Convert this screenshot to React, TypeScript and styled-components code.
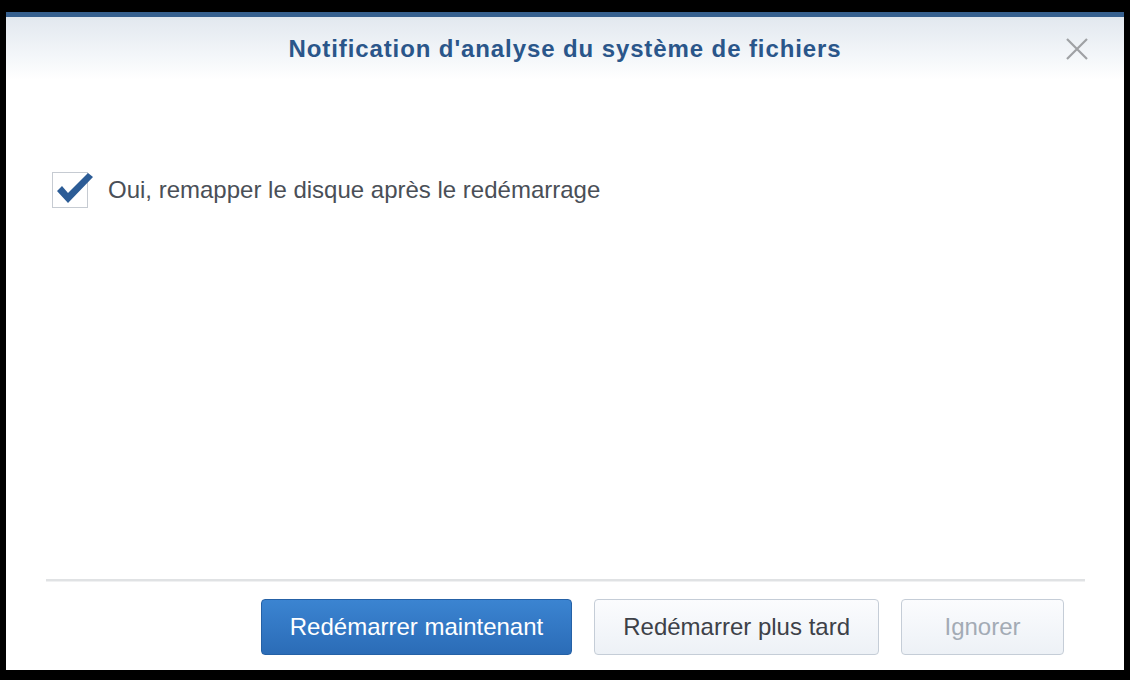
import styled, { createGlobalStyle } from "styled-components";

const GlobalStyle = createGlobalStyle`
  html, body {
    margin: 0;
    padding: 0;
    background: #000;
  }
  body {
    font-family: "Liberation Sans", Arial, sans-serif;
  }
`;

const Screen = styled.div`
  width: 1130px;
  height: 680px;
  padding: 12px 6px 10px 6px;
  box-sizing: border-box;
  display: flex;
`;

const Dialog = styled.div`
  flex: 1;
  display: flex;
  flex-direction: column;
  background: #fff;
  border-top: 5px solid #36608f;
`;

const Header = styled.header`
  height: 63px;
  flex-shrink: 0;
  display: flex;
  align-items: center;
  justify-content: center;
  position: relative;
  background: linear-gradient(to bottom, #e2e8ef 0%, #f3f6f9 60%, #ffffff 100%);
`;

const Title = styled.h1`
  margin: 0;
  font-size: 24px;
  font-weight: bold;
  letter-spacing: 0.9px;
  color: #2a568a;
`;

const CloseButton = styled.button`
  position: absolute;
  right: 34px;
  top: 19px;
  width: 26px;
  height: 26px;
  padding: 0;
  border: none;
  background: none;
  display: flex;
  align-items: center;
  justify-content: center;
  cursor: pointer;
`;

const Body = styled.div`
  flex: 1;
  padding: 92px 46px 0 46px;
`;

const CheckRow = styled.label`
  display: flex;
  align-items: center;
  gap: 20px;
  cursor: pointer;
`;

const CheckBox = styled.span`
  width: 34px;
  height: 34px;
  border: 1px solid #c6cbd2;
  background: #fff;
  position: relative;
  flex-shrink: 0;
`;

const CheckMark = styled.svg`
  position: absolute;
  left: 1px;
  top: -3px;
`;

const CheckLabel = styled.span`
  font-size: 24px;
  color: #4a4f57;
`;

const Footer = styled.footer`
  flex-shrink: 0;
  margin: 0 39px 0 40px;
  border-top: 2px solid #e0e2e4;
  box-shadow: inset 0 1px 0 #f0f1f2;
  padding: 18px 21px 15px 0;
  display: flex;
  justify-content: flex-end;
  gap: 22px;
`;

const Button = styled.button<{ $variant: "primary" | "default" | "disabled" }>`
  height: 56px;
  padding: 0 28px;
  border-radius: 4px;
  font-family: "Liberation Sans", Arial, sans-serif;
  font-size: 24px;
  cursor: pointer;
  border: 1px solid
    ${(p) => (p.$variant === "primary" ? "#2561a6" : "#c5cdd7")};
  background: ${(p) =>
    p.$variant === "primary"
      ? "linear-gradient(to bottom, #3b84d1 0%, #2b6cb7 100%)"
      : "linear-gradient(to bottom, #fbfcfe 0%, #edf1f6 100%)"};
  color: ${(p) =>
    p.$variant === "primary"
      ? "#ffffff"
      : p.$variant === "disabled"
      ? "#a3abb5"
      : "#3d4148"};
  min-width: ${(p) => (p.$variant === "disabled" ? "163px" : "auto")};
`;

export default function App() {
  return (
    <>
      <GlobalStyle />
      <Screen>
        <Dialog>
          <Header>
            <Title>Notification d'analyse du système de fichiers</Title>
            <CloseButton aria-label="Fermer">
              <svg width="24" height="24" viewBox="0 0 24 24">
                <path
                  d="M2 2 L22 22 M22 2 L2 22"
                  stroke="#9fa1a4"
                  strokeWidth="2.2"
                  fill="none"
                />
              </svg>
            </CloseButton>
          </Header>
          <Body>
            <CheckRow>
              <CheckBox>
                <CheckMark width="42" height="37" viewBox="0 0 42 37">
                  <path
                    d="M3 21 L8 16 L14 23 L34 3 L39 7 L14 33 Z"
                    fill="#2c5c96"
                  />
                </CheckMark>
              </CheckBox>
              <CheckLabel>Oui, remapper le disque après le redémarrage</CheckLabel>
            </CheckRow>
          </Body>
          <Footer>
            <Button $variant="primary">Redémarrer maintenant</Button>
            <Button $variant="default">Redémarrer plus tard</Button>
            <Button $variant="disabled" disabled>
              Ignorer
            </Button>
          </Footer>
        </Dialog>
      </Screen>
    </>
  );
}
